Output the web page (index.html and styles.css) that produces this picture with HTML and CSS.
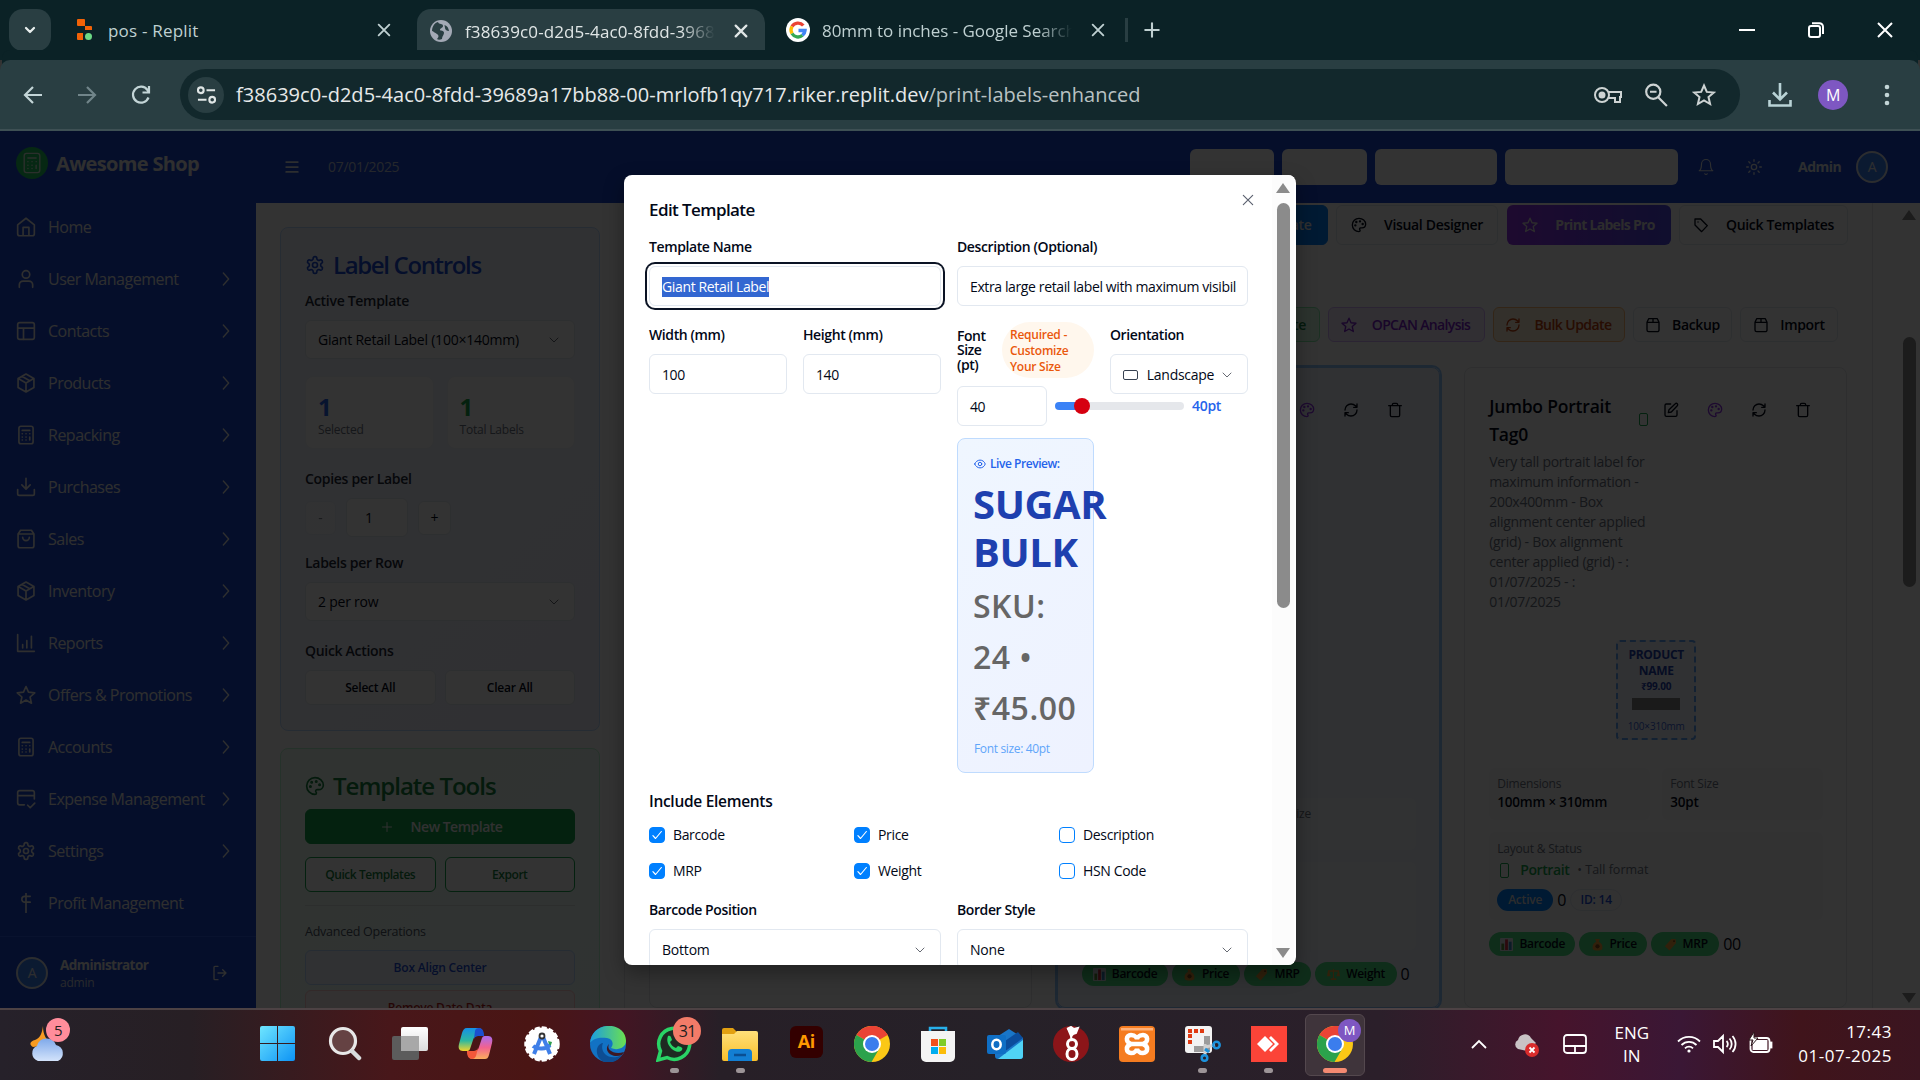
FILE: index.html
```html
<!DOCTYPE html>
<html lang="en">
<head>
<meta charset="utf-8">
<title>Awesome Shop - Print Labels</title>
<link rel="stylesheet" href="styles.css">
</head>
<body>
<svg class="sprite" xmlns="http://www.w3.org/2000/svg">
  <defs>
    <linearGradient id="sky" x1="0" y1="0" x2="1" y2="1"><stop offset="0" stop-color="#6fe6ff"/><stop offset="1" stop-color="#0d93f5"/></linearGradient>
    <linearGradient id="cloudg" x1="0" y1="0" x2="0" y2="1"><stop offset="0" stop-color="#7fa9ea"/><stop offset="1" stop-color="#d3e3fb"/></linearGradient>
    <linearGradient id="edgeg" x1="0" y1="0" x2="1" y2="0"><stop offset="0" stop-color="#1b9de2"/><stop offset="1" stop-color="#6be04f"/></linearGradient>
    <linearGradient id="foldg" x1="0" y1="0" x2="0" y2="1"><stop offset="0" stop-color="#ffe07a"/><stop offset="1" stop-color="#f9bf2b"/></linearGradient>
    <linearGradient id="copa" x1="0" y1="0" x2="0" y2="1"><stop offset="0" stop-color="#1590e8"/><stop offset=".55" stop-color="#2db8a0"/><stop offset="1" stop-color="#f3d32b"/></linearGradient>
    <linearGradient id="copb" x1="0" y1="0" x2="0" y2="1"><stop offset="0" stop-color="#a86cf0"/><stop offset=".5" stop-color="#f2628f"/><stop offset="1" stop-color="#fbae5c"/></linearGradient>
    <linearGradient id="grayg" x1="0" y1="0" x2="0" y2="1"><stop offset="0" stop-color="#fff"/><stop offset="1" stop-color="#dcdcdc"/></linearGradient>
  </defs>
  <symbol id="chev-r" viewBox="0 0 24 24"><path d="M8 3l8 9-8 9"/></symbol>
  <symbol id="chev-d" viewBox="0 0 24 24"><path d="M4 8l8 8 8-8"/></symbol>
  <symbol id="x" viewBox="0 0 24 24"><path d="M4 4l16 16M20 4L4 20"/></symbol>
  <symbol id="plus" viewBox="0 0 24 24"><path d="M12 3v18M3 12h18"/></symbol>
  <symbol id="home" viewBox="0 0 24 24"><path d="M2 9.500L12 1.500l10 8V20a2.500 2.500 0 0 1-2.500 2.500h-15A2.500 2.500 0 0 1 2 20zM8.500 22v-9.500h7V22"/></symbol>
  <symbol id="user" viewBox="0 0 24 24"><path d="M4 22v-3a4.500 4.500 0 0 1 4.500-4.500h7A4.500 4.500 0 0 1 20 19v3"/><circle cx="12" cy="6.500" r="4.500"/></symbol>
  <symbol id="contacts" viewBox="0 0 24 24"><rect x="2" y="2" width="20" height="20" rx="2.500"/><path d="M2 8.500h20M9 8.500V22"/></symbol>
  <symbol id="box" viewBox="0 0 24 24"><path d="M12 1.200l9.500 5.300v11L12 22.800 2.500 17.500v-11zM2.700 6.700L12 12l9.300-5.300M12 12v10.500M7 4l9.500 5.300"/></symbol>
  <symbol id="calc" viewBox="0 0 24 24"><rect x="3.500" y="1.500" width="17" height="21" rx="2.500"/><path d="M7.500 6.500h9M16.500 14.500V18M7.500 10.500h.1M12 10.500h.1M16.500 10.500h.1M7.500 14.500h.1M12 14.500h.1M7.500 18h.1M12 18h.1"/></symbol>
  <symbol id="download" viewBox="0 0 24 24"><path d="M2 15v5a2 2 0 0 0 2 2h16a2 2 0 0 0 2-2v-5M7 9.500l5 5 5-5M12 14.500V1.500"/></symbol>
  <symbol id="bag" viewBox="0 0 24 24"><path d="M5.500 1.500L2.500 6v14A2.500 2.500 0 0 0 5 22.500h14a2.500 2.500 0 0 0 2.500-2.500V6l-3-4.500zM2.500 6h19M16 10a4 4 0 0 1-8 0"/></symbol>
  <symbol id="chart" viewBox="0 0 24 24"><path d="M2 2v20h20M8 18v-4M13 18V9M18.500 18V4"/></symbol>
  <symbol id="star" viewBox="0 0 24 24"><path d="M12 1.800l3 6.800 7.500.8-5.600 5 1.600 7.400L12 18l-6.500 3.800 1.600-7.400-5.600-5 7.500-.8z"/></symbol>
  <symbol id="card" viewBox="0 0 24 24"><path d="M10 19H4.500A2.500 2.500 0 0 1 2 16.500v-12A2.500 2.500 0 0 1 4.500 2h15A2.500 2.500 0 0 1 22 4.500V12M2 8h20M14 19.500l3 3 5.500-5.500"/></symbol>
  <symbol id="gear" viewBox="0 0 24 24"><path d="M12.200 2h-.4a2 2 0 0 0-2 2v.2a2 2 0 0 1-1 1.700l-.4.300a2 2 0 0 1-2 0l-.2-.1a2 2 0 0 0-2.700.7l-.2.400a2 2 0 0 0 .7 2.700l.2.100a2 2 0 0 1 1 1.700v.5a2 2 0 0 1-1 1.800l-.2.100a2 2 0 0 0-.7 2.700l.2.400a2 2 0 0 0 2.700.7l.2-.1a2 2 0 0 1 2 0l.4.300a2 2 0 0 1 1 1.700v.2a2 2 0 0 0 2 2h.4a2 2 0 0 0 2-2v-.2a2 2 0 0 1 1-1.700l.4-.3a2 2 0 0 1 2 0l.2.100a2 2 0 0 0 2.700-.7l.2-.4a2 2 0 0 0-.7-2.700l-.2-.1a2 2 0 0 1-1-1.800v-.5a2 2 0 0 1 1-1.700l.2-.1a2 2 0 0 0 .7-2.700l-.2-.4a2 2 0 0 0-2.700-.7l-.2.100a2 2 0 0 1-2 0l-.4-.3a2 2 0 0 1-1-1.700V4a2 2 0 0 0-2-2z"/><circle cx="12" cy="12" r="3"/></symbol>
  <symbol id="profit" viewBox="0 0 24 24"><path d="M12 0v24M17 4h-6.500a3.500 3.500 0 0 0 0 7H17"/></symbol>
  <symbol id="logout" viewBox="0 0 24 24"><path d="M9 22H4.500A1.500 1.500 0 0 1 3 20.500v-17A1.500 1.500 0 0 1 4.500 2H9M16 17l5-5-5-5M21 12H9"/></symbol>
  <symbol id="menu" viewBox="0 0 24 24"><path d="M2 3.500h20M2 12h20M2 20.500h20"/></symbol>
  <symbol id="bell" viewBox="0 0 24 24"><path d="M6 8a6 6 0 0 1 12 0c0 7 3 9 3 9H3s3-2 3-9M10.300 21a2 2 0 0 0 3.400 0"/></symbol>
  <symbol id="sun" viewBox="0 0 24 24"><circle cx="12" cy="12" r="4"/><path d="M12 1v2.500M12 20.500V23M4.200 4.200L6 6M18 18l1.800 1.800M1 12h2.500M20.500 12H23M4.200 19.800L6 18M18 6l1.800-1.800"/></symbol>
  <symbol id="palette" viewBox="0 0 24 24"><path d="M12 2a10 10 0 1 0 0 20c1 0 1.700-.7 1.700-1.700 0-.4-.2-.8-.5-1.100a1.700 1.700 0 0 1 1.200-2.800h2A5.600 5.600 0 0 0 22 11c0-5-4.500-9-10-9z"/><circle cx="8" cy="7.500" r=".8"/><circle cx="13.500" cy="6.500" r=".8"/><circle cx="17.500" cy="10.500" r=".8"/><circle cx="6.500" cy="12.500" r=".8"/></symbol>
  <symbol id="tag" viewBox="0 0 24 24"><path d="M3 3h8.500l10 10-8.500 9L3 12zM7.500 7.500h.1"/></symbol>
  <symbol id="refresh" viewBox="0 0 24 24"><path d="M3 12a9 9 0 0 1 9-9 9.700 9.700 0 0 1 6.700 2.700L21 8M21 3v5h-5M21 12a9 9 0 0 1-9 9 9.700 9.700 0 0 1-6.700-2.700L3 16M8 16H3v5"/></symbol>
  <symbol id="pack" viewBox="0 0 24 24"><path d="M3 8l2.500-5.500h13L21 8v11.500A2.500 2.500 0 0 1 18.500 22h-13A2.500 2.500 0 0 1 3 19.500zM3 8h18M12 2.500V8"/></symbol>
  <symbol id="edit" viewBox="0 0 24 24"><path d="M11.500 3H5a2 2 0 0 0-2 2v14.500a2 2 0 0 0 2 2h14a2 2 0 0 0 2-2V13M18.400 2.600a2.100 2.100 0 0 1 3 3L12.500 15 8 16l1-4.500z"/></symbol>
  <symbol id="trash" viewBox="0 0 24 24"><path d="M2.500 5.500h19M19 5.500V20a2 2 0 0 1-2 2H7a2 2 0 0 1-2-2V5.500M8 5.500V4a2 2 0 0 1 2-2h4a2 2 0 0 1 2 2v1.500"/></symbol>
  <symbol id="eye" viewBox="0 0 24 24"><path d="M1.500 12C5 1.500 19 1.500 22.500 12 19 22.500 5 22.500 1.500 12z"/><circle cx="12" cy="12" r="3.500"/></symbol>
  <symbol id="check" viewBox="0 0 24 24"><path d="M5 13l4.500 5L19.500 6"/></symbol>
  <symbol id="e-chart" viewBox="0 0 14 14"><rect width="14" height="14" rx="1" fill="#e1e8ed"/><rect x="1.500" y="6" width="3" height="7" fill="#5c913b"/><rect x="5.500" y="1.500" width="3" height="11.500" fill="#dd2e44"/><rect x="9.500" y="4" width="3" height="9" fill="#3b88c3"/></symbol>
  <symbol id="e-money" viewBox="0 0 14 14"><path d="M4.500 1h5L8.500 4C12 6 13 9 12 12c-1 2-9 2-10 0-1-3 0-6 3.500-8z" fill="#f2a23a"/><circle cx="7" cy="9" r="2.300" fill="#8a4b1c"/></symbol>
  <symbol id="e-tag" viewBox="0 0 14 14"><path d="M8 1h4.500L13 5.500 6 13.500 1 9z" fill="#f2a23a"/><circle cx="10.800" cy="3.300" r="1" fill="#7a3c10"/></symbol>
  <symbol id="e-scale" viewBox="0 0 14 14"><path d="M6.400 1h1.200v1.500H13v1L14 9h-4l1.800-5H7.600v7H10v2H4v-2h2.400V4H2.500L4 9H0l1-5.500v-1h5.400z" fill="#f2a23a"/></symbol>
  <symbol id="chrome" viewBox="0 0 36 36"><circle cx="18" cy="18" r="18" fill="#fbc816"/><path d="M18 18L2.400 9A18 18 0 0 1 33.600 9z" fill="#ea4335"/><path d="M18 0a18 18 0 0 1 15.600 9H18z" fill="#ea4335"/><path d="M2.400 9A18 18 0 0 0 17.500 36l8-13.700L18 18z" fill="#2ba24c"/><circle cx="18" cy="18" r="9" fill="#fff"/><circle cx="18" cy="18" r="7" fill="#3b7ded"/></symbol>
</svg>

<div class="screen">
  <div class="tabstrip">
    <div class="tab-search"><svg class="i s12 w4"><use href="#chev-d"/></svg></div>
    <div class="tab tab-a">
      <svg class="fav" viewBox="0 0 16 22"><path d="M1 0h6a1 1 0 0 1 1 1v6H1a1 1 0 0 1-1-1V1a1 1 0 0 1 1-1zM8 7h6a1 1 0 0 1 1 1v3H8zM1 14h5v7H1a1 1 0 0 1-1-1v-5a1 1 0 0 1 1-1z" fill="#f26207"/><circle cx="11.500" cy="17.500" r="3.500" fill="#6bd985"/></svg>
      <span class="tab-t">pos - Replit</span>
      <svg class="i s16 w25"><use href="#x"/></svg>
    </div>
    <div class="tab tab-b">
      <svg class="globe" viewBox="0 0 22 22"><circle cx="11" cy="11" r="11" fill="#a3a9b5"/><path d="M8 2c1 3 5 1 5 4 0 2-3 2-3 4 0 1 4 0 4 3 0 2-2 3-2 6-2 1-4 1-5 0 2-2 2-4 0-5s-4-3-5-3c0-4 2-8 6-9zM14.500 5c3 1 4 3 4.500 6-2 0-4-1-4-3z" fill="#293e42"/></svg>
      <span class="tab-t fade">f38639c0-d2d5-4ac0-8fdd-39689</span>
      <svg class="i s16 w3"><use href="#x"/></svg>
    </div>
    <div class="tab tab-c">
      <svg class="gfav" viewBox="0 0 24 24"><circle cx="12" cy="12" r="12" fill="#fff"/><g fill="none" stroke-width="3.400"><path d="M17.300 7.500A7 7 0 0 0 6 8.500" stroke="#ea4335"/><path d="M6 8.500a7 7 0 0 0 0 7" stroke="#fbbc05"/><path d="M6 15.500a7 7 0 0 0 10.500 1.800" stroke="#34a853"/><path d="M16.500 17.300A7 7 0 0 0 19 12.500h-6.500" stroke="#4285f4"/></g></svg>
      <span class="tab-t fade">80mm to inches - Google Search</span>
      <svg class="i s16 w25"><use href="#x"/></svg>
    </div>
    <span class="tab-sep"></span>
    <svg class="i s18 w25 newtab"><use href="#plus"/></svg>
    <div class="winbtns">
      <svg viewBox="0 0 16 16"><path d="M0 8h16"/></svg>
      <svg viewBox="0 0 16 16"><rect x="1" y="4" width="11" height="11" rx="2"/><path d="M4 1.200h7.500A3.500 3.500 0 0 1 15 4.700V12"/></svg>
      <svg viewBox="0 0 16 16"><path d="M1 1l14 14M15 1L1 15"/></svg>
    </div>
  </div>

  <div class="toolbar">
    <svg class="nav" viewBox="0 0 20 20"><path d="M19 10H2M10 2l-8 8 8 8"/></svg>
    <svg class="nav dim" viewBox="0 0 20 20"><path d="M1 10h17M10 2l8 8-8 8"/></svg>
    <svg class="nav" viewBox="0 0 20 20"><path d="M17.500 12.500A8 8 0 1 1 16.500 5l1.500 2M18 1v6.500h-6.500"/></svg>
    <div class="omnibox">
      <div class="site"><svg viewBox="0 0 20 18"><circle cx="4" cy="4" r="3"/><path d="M10 4h9M1 14h9"/><circle cx="16" cy="14" r="3"/></svg></div>
      <span class="url">f38639c0-d2d5-4ac0-8fdd-39689a17bb88-00-mrlofb1qy717.riker.replit.dev<span>/print-labels-enhanced</span></span>
      <svg class="o-ic key" viewBox="0 0 28 18"><circle cx="8" cy="9" r="7"/><circle cx="8" cy="9" r="2.500" fill="#cdd3d3"/><path d="M14.500 6H27v5h-1v5h-5v-4h-6.500"/></svg>
      <svg class="o-ic" viewBox="0 0 22 22"><circle cx="8.500" cy="8" r="6.500"/><path d="M13 13l8 8M5.500 8h6"/></svg>
      <svg class="o-ic" viewBox="0 0 24 24"><path d="M12 2.500l2.800 6.400 7 .6-5.300 4.600 1.600 6.900L12 17.400 5.900 21l1.600-6.900L2.200 9.500l7-.6z"/></svg>
    </div>
    <svg class="dl" viewBox="0 0 24 24"><path d="M12 0v16M5 9.500l7 7 7-7M1.500 17v5.500h21V17"/></svg>
    <div class="me">M</div>
    <svg class="dots" viewBox="0 0 6 22"><circle cx="3" cy="3" r="2.300"/><circle cx="3" cy="11" r="2.300"/><circle cx="3" cy="19" r="2.300"/></svg>
  </div>

  <div class="page">
    <aside class="side">
      <div class="brand"><span class="brand-ic"><svg class="i s20 w15"><use href="#calc"/></svg></span><b>Awesome Shop</b></div>
      <nav class="menu">
        <a><svg class="i s20"><use href="#home"/></svg><span>Home</span></a>
        <a><svg class="i s20"><use href="#user"/></svg><span>User Management</span><svg class="i s16"><use href="#chev-r"/></svg></a>
        <a><svg class="i s20"><use href="#contacts"/></svg><span>Contacts</span><svg class="i s16"><use href="#chev-r"/></svg></a>
        <a><svg class="i s20"><use href="#box"/></svg><span>Products</span><svg class="i s16"><use href="#chev-r"/></svg></a>
        <a><svg class="i s20"><use href="#calc"/></svg><span>Repacking</span><svg class="i s16"><use href="#chev-r"/></svg></a>
        <a><svg class="i s20"><use href="#download"/></svg><span>Purchases</span><svg class="i s16"><use href="#chev-r"/></svg></a>
        <a><svg class="i s20"><use href="#bag"/></svg><span>Sales</span><svg class="i s16"><use href="#chev-r"/></svg></a>
        <a><svg class="i s20"><use href="#box"/></svg><span>Inventory</span><svg class="i s16"><use href="#chev-r"/></svg></a>
        <a><svg class="i s20"><use href="#chart"/></svg><span>Reports</span><svg class="i s16"><use href="#chev-r"/></svg></a>
        <a><svg class="i s20"><use href="#star"/></svg><span>Offers &amp; Promotions</span><svg class="i s16"><use href="#chev-r"/></svg></a>
        <a><svg class="i s20"><use href="#calc"/></svg><span>Accounts</span><svg class="i s16"><use href="#chev-r"/></svg></a>
        <a><svg class="i s20"><use href="#card"/></svg><span>Expense Management</span><svg class="i s16"><use href="#chev-r"/></svg></a>
        <a><svg class="i s20"><use href="#gear"/></svg><span>Settings</span><svg class="i s16"><use href="#chev-r"/></svg></a>
        <a><svg class="i s20"><use href="#profit"/></svg><span>Profit Management</span></a>
      </nav>
      <div class="account">
        <span class="avatar">A</span>
        <div class="who"><b>Administrator</b><span>admin</span></div>
        <svg class="i s16"><use href="#logout"/></svg>
      </div>
    </aside>

    <div class="content">
      <header class="top">
        <svg class="i s14 burger"><use href="#menu"/></svg>
        <span class="date">07/01/2025</span>
        <div class="slots"><i class="k1"></i><i class="k2"></i><i class="k3"></i><i class="k4"></i></div>
        <svg class="i s18 w15 bell"><use href="#bell"/></svg>
        <svg class="i s16 w2 sun"><use href="#sun"/></svg>
        <b>Admin</b>
        <span class="avatar">A</span>
      </header>

      <div class="body">
        <div class="left">
          <section class="panel blue">
            <h2><svg class="i s20"><use href="#gear"/></svg>Label Controls</h2>
            <label>Active Template</label>
            <div class="select"><span>Giant Retail Label (100×140mm)</span><svg class="i s12"><use href="#chev-d"/></svg></div>
            <div class="stats">
              <div><b class="c-blue">1</b><span>Selected</span></div>
              <div><b class="c-green">1</b><span>Total Labels</span></div>
            </div>
            <label class="m20">Copies per Label</label>
            <div class="stepper"><span class="off">-</span><span class="num">1</span><span>+</span></div>
            <label class="m16">Labels per Row</label>
            <div class="select"><span>2 per row</span><svg class="i s12"><use href="#chev-d"/></svg></div>
            <label class="m20">Quick Actions</label>
            <div class="pair"><span class="btn">Select All</span><span class="btn">Clear All</span></div>
          </section>
          <section class="panel green">
            <h2><svg class="i s20"><use href="#palette"/></svg>Template Tools</h2>
            <span class="btn solid"><svg class="i s12"><use href="#plus"/></svg>New Template</span>
            <div class="pair outline"><span class="btn">Quick Templates</span><span class="btn">Export</span></div>
            <hr>
            <p class="adv">Advanced Operations</p>
            <span class="btn op-blue">Box Align Center</span>
            <span class="btn op-red">Remove Date Data</span>
          </section>
        </div>

        <div class="board">
          <div class="row1">
            <span class="btn create">Create</span>
            <span class="btn" style="width:162px"><svg class="i s16"><use href="#palette"/></svg>Visual Designer</span>
            <span class="btn pro"><svg class="i s16"><use href="#star"/></svg>Print Labels Pro</span>
            <span class="btn" style="width:169px"><svg class="i s16"><use href="#tag"/></svg>Quick Templates</span>
          </div>
          <div class="row2">
            <span class="btn g">Create</span>
            <span class="btn p"><svg class="i s16"><use href="#star"/></svg>OPCAN Analysis</span>
            <span class="btn o"><svg class="i s16"><use href="#refresh"/></svg>Bulk Update</span>
            <span class="btn" style="width:99px"><svg class="i s16"><use href="#pack"/></svg>Backup</span>
            <span class="btn" style="width:98px"><svg class="i s16"><use href="#pack"/></svg>Import</span>
          </div>
          <div class="cards">
            <article class="tpl"></article>
            <article class="tpl active">
              <div class="tpl-head"><div></div><div class="acts"><svg class="i s16"><use href="#edit"/></svg><svg class="i s16 c-purple"><use href="#palette"/></svg><svg class="i s16"><use href="#refresh"/></svg><svg class="i s16"><use href="#trash"/></svg></div></div>
              <div class="tpl-body">
                <div class="dims"><div></div><div><span>Font Size</span></div></div>
                <div class="layout"></div>
                <div class="badges"><span style="width:86px"><svg><use href="#e-chart"/></svg>Barcode</span><span style="width:68px"><svg><use href="#e-money"/></svg>Price</span><span style="width:67px"><svg><use href="#e-tag"/></svg>MRP</span><span style="width:82px"><svg><use href="#e-scale"/></svg>Weight</span><em>0</em></div>
              </div>
            </article>
            <article class="tpl">
              <div class="tpl-head">
                <div class="tpl-title"><h3>Jumbo Portrait<br>Tag0</h3><i class="tall"></i>
                </div>
                <div class="acts"><svg class="i s16"><use href="#edit"/></svg><svg class="i s16 c-purple"><use href="#palette"/></svg><svg class="i s16"><use href="#refresh"/></svg><svg class="i s16"><use href="#trash"/></svg></div>
              </div>
              <p class="desc">Very tall portrait label for<br>maximum information -<br>200x400mm - Box<br>alignment center applied<br>(grid) - Box alignment<br>center applied (grid) - :<br>01/07/2025 - :<br>01/07/2025</p>
              <div class="mini"><b>PRODUCT<br>NAME</b><strong>₹99.00</strong><i></i><span>100×310mm</span></div>
              <div class="dims"><div><span>Dimensions</span><b>100mm × 310mm</b></div><div><span>Font Size</span><b>30pt</b></div></div>
              <div class="layout">
                <span>Layout &amp; Status</span>
                <div class="orient"><i class="tall"></i><b>Portrait</b><span>• Tall format</span></div>
                <div class="state"><span class="on">Active</span><em>0</em><span class="id">ID: 14</span></div>
              </div>
              <div class="badges"><span style="width:86px"><svg><use href="#e-chart"/></svg>Barcode</span><span style="width:68px"><svg><use href="#e-money"/></svg>Price</span><span style="width:68px"><svg><use href="#e-tag"/></svg>MRP</span><em>00</em></div>
            </article>
          </div>
        </div>
        <div class="pagebar"><i class="up"></i><i class="thumb"></i><i class="down"></i></div>
      </div>
    </div>
    <div class="overlay"></div>
  </div>

  <footer class="taskbar">
    <div class="weather"><svg viewBox="0 0 38 40"><path d="M14 4c0 9 3 14 10 18L4 25C-1 22 2 19 6 18c6-2 7-8 8-14z" fill="#f79b22"/><path d="M9 39a8 8 0 0 1-1-15 10 10 0 0 1 19-1 8.500 8.500 0 0 1 2 16z" fill="url(#cloudg)"/></svg><b>5</b></div>
    <div class="apps">
      <span><svg viewBox="0 0 36 36"><path d="M0 2a2 2 0 0 1 2-2h15v17H0zM18 0h15a2 2 0 0 1 2 2v15H18zM0 18h17v17H2a2 2 0 0 1-2-2zM18 18h17v15a2 2 0 0 1-2 2H18z" fill="url(#sky)"/></svg></span>
      <span><svg viewBox="0 0 36 36"><circle cx="17" cy="15" r="12.500" fill="#654243" stroke="#e8e8e8" stroke-width="3.200"/><path d="M26 25l7 7" stroke="#d9dcdd" stroke-width="4.500" stroke-linecap="round"/></svg></span>
      <span><svg viewBox="0 0 36 36"><rect x="0" y="10" width="27" height="24" rx="2" fill="#5c5c5c"/><rect x="9" y="1" width="27" height="24" rx="2" fill="url(#grayg)"/><path d="M9 10h18v15H9z" fill="#a8a8a8"/></svg></span>
      <span><svg viewBox="0 0 36 36"><path d="M27 33H15c-4 0-5-3-6-8h7c3 0 4-1 5-4l3-9c1-2 2-2 4-2h2c4 0 5 3 4 7l-3 12c-1 3-2 4-4 4z" fill="url(#copb)"/><path d="M9 25h7c2 0 3-1 4-3l-2 8c-1 2-2 3-4 3-4 0-5-4-5-8z" fill="#f4583a"/><path d="M9 2h11c4 0 5 3 6 8h-6c-3 0-4 1-5 4l-3 9c-1 2-2 2-4 2H5c-4 0-5-3-4-7L4 7c1-3 2-5 5-5z" fill="url(#copa)"/><path d="M26 10h-6c-2 0-3 1-4 3l1-8c0-2 2-3 4-3 4 0 5 4 5 8z" fill="#1b4fd0"/></svg></span>
      <span><svg viewBox="0 0 36 36"><circle cx="18" cy="18" r="16.500" fill="#fff" stroke="#fff" stroke-width="2.500" stroke-dasharray="5 2"/><path d="M24 15l4 1-2 6z" fill="#2f9e4f"/><path d="M17 11L10 28M19 11l7 17M9 20c5 4 13 3 17-1" fill="none" stroke="#3f7fe8" stroke-width="4"/><circle cx="18" cy="10" r="2.500" fill="#fff" stroke="#333" stroke-width="1.800"/></svg></span>
      <span><svg viewBox="0 0 36 36"><circle cx="18" cy="18" r="18" fill="#1272c4"/><path d="M0 17C2-6 36-5 36 15c0 7-9 10-15 7 3-4 2-9-4-10C10 11 3 12 0 17z" fill="url(#edgeg)"/><path d="M13 17c-4 9 6 19 19 12-5 8-14 9-20 6C4 29 6 18 13 17z" fill="#0d4d93"/><path d="M19 18c-3 6 5 11 15 8l-2 3c-11 4-19-5-13-11z" fill="#3d1824"/></svg></span>
      <span class="run"><svg viewBox="0 0 36 36"><path d="M2 34l2.500-9A15.500 15.500 0 1 1 11 31.500z" fill="#1e2a22" stroke="#29d366" stroke-width="3.500"/><path d="M12 10c2-1 3 0 4 4l-2 2c1 3 3 5 6 6l2-2c4 1 5 2 4 4-4 6-18-4-14-14z" fill="#29d366"/></svg><b class="n31">31</b></span>
      <span class="run"><svg viewBox="0 0 36 36"><path d="M0 4a2 2 0 0 1 2-2h9l4 4-3 3H0z" fill="#e2a011"/><path d="M0 8h12l3-3h19a2 2 0 0 1 2 2v26a2 2 0 0 1-2 2H2a2 2 0 0 1-2-2z" fill="url(#foldg)"/><path d="M6 27a4 4 0 0 1 4-4h16a4 4 0 0 1 4 4v8H6z" fill="#137fd3"/><path d="M12 29h12" stroke="#0a4f92" stroke-width="2.500"/></svg></span>
      <span><i class="ai">Ai</i></span>
      <span><svg><use href="#chrome"/></svg></span>
      <span><svg viewBox="0 0 36 36"><path d="M10 6V2h16v4" fill="none" stroke="#27b0ea" stroke-width="2.500"/><path d="M1 5h34v26a5 5 0 0 1-5 5H6a5 5 0 0 1-5-5z" fill="#f4f4f4"/><path d="M11 13h7v7h-7z" fill="#f1511b"/><path d="M19 13h7v7h-7z" fill="#80cc28"/><path d="M11 21h7v7h-7z" fill="#00adef"/><path d="M19 21h7v7h-7z" fill="#fbbc09"/></svg></span>
      <span><svg viewBox="0 0 36 36"><path d="M8 12L22 3l14 9v18a3 3 0 0 1-3 3H11a3 3 0 0 1-3-3z" fill="#1976c8"/><path d="M15 17l16-11 5 6-19 14z" fill="#0b4d9c"/><path d="M36 14v16a3 3 0 0 1-3 3H11z" fill="#50d3f5"/><rect y="9" width="19" height="19" rx="2" fill="#0f6fc5"/><ellipse cx="9.500" cy="18.500" rx="4.200" ry="4.700" fill="none" stroke="#fff" stroke-width="2.500"/></svg></span>
      <span><svg viewBox="0 0 36 36"><circle cx="18" cy="18" r="18" fill="#8c1519"/><path d="M14 3l4-2 3 2 4-1-2 5c-4 1-6 3-4 8" fill="#fff" stroke="#fff" stroke-width="2"/><ellipse cx="19" cy="18" rx="4.500" ry="4.500" fill="none" stroke="#fff" stroke-width="3"/><ellipse cx="19" cy="28" rx="5" ry="5.500" fill="none" stroke="#fff" stroke-width="3"/></svg></span>
      <span><svg viewBox="0 0 36 36"><rect width="36" height="36" rx="4" fill="#f57c20"/><path d="M2 2h32v2.500H2z" fill="#ffb27a"/><path d="M12 18c-6-2-5-9 0-9s6 4 6 4 1-4 6-4 6 7 0 9c6 2 5 9 0 9s-6-4-6-4-1 4-6 4-6-7 0-9zM13 18h10" fill="none" stroke="#fff" stroke-width="4.500"/></svg></span>
      <span class="run"><svg viewBox="0 0 36 36"><rect width="27" height="27" rx="3" fill="#f3f3f3"/><path d="M3 5h17M5 8v11" stroke="#e03a12" stroke-width="4" stroke-dasharray="4 2"/><path d="M9 20h10V10h6v16H9z" fill="#9c9c9c"/><path d="M20 21l10-2M20 18v12" stroke="#d0d0d0" stroke-width="3"/><circle cx="31.500" cy="19" r="3.200" fill="none" stroke="#1c92dc" stroke-width="2.500"/><circle cx="19.500" cy="32" r="2.800" fill="none" stroke="#1c92dc" stroke-width="2.500"/><path d="M20 23l4 3" stroke="#1c92dc" stroke-width="3"/></svg></span>
      <span class="run"><svg viewBox="0 0 36 36"><path d="M0 0h36v36H0z" fill="#fb4438"/><path d="M14 10l8 8-8 8-8-8z" fill="#fff"/><path d="M19 11l7 7-7 7" fill="none" stroke="#fff" stroke-width="2.800"/></svg></span>
      <span class="cur"><svg><use href="#chrome"/></svg><b class="mm">M</b></span>
    </div>
    <div class="tray">
      <svg class="t-chev" viewBox="0 0 16 10"><path d="M1 9l7-7 7 7"/></svg>
      <svg class="t-cloud" viewBox="0 0 26 24"><path d="M4 15a5 5 0 0 1 0-9 7 7 0 0 1 13-2l5 5-9 8z" fill="#c9c3c5"/><circle cx="18" cy="16" r="7" fill="#d92c2c"/><path d="M15.500 13.500l5 5M20.500 13.500l-5 5" stroke="#fff" stroke-width="1.800"/></svg>
      <svg class="t-pad" viewBox="0 0 24 20"><rect x="1" y="1" width="22" height="18" rx="3"/><path d="M1 12h22M12 12v7"/></svg>
      <span class="lang">ENG<br>IN</span>
      <svg class="t-wifi" viewBox="0 0 24 18"><path d="M1 6.500a15.500 15.500 0 0 1 22 0M4.500 10a10.500 10.500 0 0 1 15 0M8 13.300a5.700 5.700 0 0 1 8 0"/><circle cx="12" cy="16" r="1.600" fill="#fff" stroke="none"/></svg>
      <svg class="t-vol" viewBox="0 0 24 20"><path d="M1 7h4l5-5v16l-5-5H1zM13.500 7a4 4 0 0 1 0 6M16.500 4.500a8 8 0 0 1 0 11M19.500 2a12 12 0 0 1 0 16"/></svg>
      <svg class="t-bat" viewBox="0 0 25 20"><rect x="2.500" y="4" width="19" height="14" rx="3"/><path d="M5.500 7h13v8h-13z" fill="#fff"/><path d="M22 8.500v5h1.500v-5z" fill="#fff"/><path d="M6 -2L1 6h4l-2 6 7-8H6z" fill="#fff" stroke="#2b171b" stroke-width="1"/></svg>
      <span class="clock">17:43<br>01-07-2025</span>
    </div>
  </footer>

  <div class="dialog">
    <div class="form">
      <h1>Edit Template</h1>
      <svg class="i s14 close"><use href="#x"/></svg>
      <div class="g2">
        <div class="f"><label>Template Name</label><div class="in focus"><mark>Giant Retail Label</mark></div></div>
        <div class="f"><label>Description (Optional)</label><div class="in"><span class="clip">Extra large retail label with maximum visibil</span></div></div>
      </div>
      <div class="g4">
        <div class="f"><label>Width (mm)</label><div class="in">100</div></div>
        <div class="f"><label>Height (mm)</label><div class="in">140</div></div>
        <div class="fs">
          <div class="fs-top"><span class="fs-l">Font<br>Size<br>(pt)</span><span class="req">Required -<br>Customize<br>Your Size</span></div>
          <div class="fs-row"><div class="in">40</div><div class="slider"><i></i><b></b></div><span class="pt">40pt</span></div>
          <div class="live">
            <div class="live-t"><svg class="i s12"><use href="#eye"/></svg>Live Preview:</div>
            <div class="big">SUGAR<br>BULK</div>
            <div class="sku">SKU:<br>24 •<br>₹45.00</div>
            <div class="fsz">Font size: 40pt</div>
          </div>
        </div>
        <div class="f"><label>Orientation</label><div class="in sel"><i class="wide"></i><span class="land">Landscape</span><svg class="i s12"><use href="#chev-d"/></svg></div></div>
      </div>
      <h4>Include Elements</h4>
      <div class="g3">
        <span><i class="cb on"><svg class="i"><use href="#check"/></svg></i>Barcode</span><span><i class="cb on"><svg class="i"><use href="#check"/></svg></i>Price</span><span><i class="cb"></i>Description</span>
        <span><i class="cb on"><svg class="i"><use href="#check"/></svg></i>MRP</span><span><i class="cb on"><svg class="i"><use href="#check"/></svg></i>Weight</span><span><i class="cb"></i>HSN Code</span>
      </div>
      <div class="g2 last">
        <div class="f"><label>Barcode Position</label><div class="in sel"><span>Bottom</span><svg class="i s12"><use href="#chev-d"/></svg></div></div>
        <div class="f"><label>Border Style</label><div class="in sel"><span>None</span><svg class="i s12"><use href="#chev-d"/></svg></div></div>
      </div>
    </div>
    <div class="bar"><i class="up"></i><i class="thumb"></i><i class="down"></i></div>
  </div>
</div>
</body>
</html>
```
FILE: styles.css
```css
* { box-sizing: border-box; }
body { margin: 0; font-family: "Open Sans", "Noto Sans", sans-serif; font-size: 14px; line-height: 20px; letter-spacing: -0.2px; color: #020817; background: #333; }
h1, h2, h3, h4, p, hr { margin: 0; }
i, em { font-style: normal; }
.sprite { position: absolute; width: 0; height: 0; }
.screen { position: relative; width: 1920px; height: 1080px; overflow: hidden; display: grid; grid-template-rows: 60px 71px 877px 72px; }

.i { fill: none; stroke: currentColor; stroke-width: 2; stroke-linecap: round; stroke-linejoin: round; flex: none; }
.s12 { width: 12px; height: 12px; }
.s14 { width: 14px; height: 14px; }
.s16 { width: 16px; height: 16px; }
.s18 { width: 18px; height: 18px; }
.s20 { width: 20px; height: 20px; }
.w15 { stroke-width: 1.5; }
.w25 { stroke-width: 2.8; }
.w3 { stroke-width: 3.4; }
.w4 { stroke-width: 4.5; }

/* browser chrome */
.tabstrip { display: flex; align-items: center; background: #0b2226; color: #bfd0d1; padding-left: 9px; }
.tab-search { width: 42px; height: 42px; border-radius: 14px; background: #293e42; display: flex; align-items: center; justify-content: center; color: #e8eeee; }
.tab { display: flex; align-items: center; }
.tab-t { font-size: 17px; letter-spacing: 0.2px; flex: 1; white-space: nowrap; overflow: hidden; line-height: 24px; padding-top: 2px; }
.fade { -webkit-mask-image: linear-gradient(90deg, #000 calc(100% - 34px), transparent); mask-image: linear-gradient(90deg, #000 calc(100% - 34px), transparent); }
.tab-a { width: 366px; padding: 0 25px 0 26px; }
.fav { width: 16px; height: 22px; margin-right: 15px; }
.tab-b { width: 348px; height: 51px; align-self: flex-end; background: #293e42; border-radius: 14px 14px 0 0; padding: 0 16px 8px 13px; color: #e0e6e6; }
.tab-b .tab-t { margin-right: 18px; letter-spacing: 0.12px; }
.globe { width: 22px; height: 22px; margin-right: 13px; }
.tab-c { width: 360px; padding: 0 19px 0 21px; }
.gfav { width: 24px; height: 24px; margin-right: 12px; }
.tab-c .tab-t { margin-right: 18px; letter-spacing: -0.05px; }
.tab-sep { width: 3px; height: 24px; background: #293e42; }
.newtab { margin-left: 15px; }
.winbtns { margin-left: auto; display: flex; gap: 53px; padding-right: 27px; }
.winbtns svg { width: 16px; height: 16px; fill: none; stroke: #fff; stroke-width: 2; }
.toolbar { background: #293e42; border-bottom: 2px solid #3e5054; border-radius: 10px 10px 0 0; box-shadow: 0 -12px 0 -2px #0b2226; display: flex; align-items: center; padding: 0 0 0 23px; }
.nav { width: 20px; height: 20px; fill: none; stroke: #c3d5d7; stroke-width: 2.2; margin-right: 34px; }
.nav.dim { stroke: #71858a; }
.omnibox { width: 1560px; height: 51px; margin-left: -5px; border-radius: 26px; background: #12282c; display: flex; align-items: center; padding: 0 24px 0 8px; flex: none; }
.site { width: 36px; height: 36px; border-radius: 50%; background: #293e42; display: flex; align-items: center; justify-content: center; }
.site svg { width: 19px; height: 18px; fill: none; stroke: #e0e6e6; stroke-width: 2.2; }
.url { flex: 1; margin-left: 12px; font-size: 20px; letter-spacing: 0.03px; line-height: 28px; color: #e6e9e9; white-space: nowrap; }
.url span { color: #b9c2c3; }
.o-ic { width: 24px; height: 24px; margin-left: 24px; fill: none; stroke: #cdd3d3; stroke-width: 2; }
.o-ic.key { width: 28px; height: 18px; margin-right: -2px; }
.dl { width: 24px; height: 24px; margin-left: 28px; fill: none; stroke: #b9d3d6; stroke-width: 2.6; }
.me { width: 30px; height: 30px; border-radius: 50%; background: #7e57c2; color: #fff; margin-left: 26px; text-align: center; line-height: 30px; font-size: 16px; }
.dots { width: 6px; height: 28px; margin-left: 36px; fill: #c3d5d7; }

/* page */
.page { position: relative; display: grid; grid-template-columns: 256px 1fr; background: #fff; overflow: hidden; }
.overlay { position: absolute; inset: 0; background: rgba(0, 0, 0, 0.8); }
.side { height: 877px; background: #1b48d2; color: #e8e8e8; display: flex; flex-direction: column; }
.brand { display: flex; align-items: center; gap: 8px; padding: 16px 16px 0; font-size: 20px; letter-spacing: -0.65px; height: 48px; }
.brand-ic { width: 32px; height: 32px; border-radius: 50%; background: #22c55e; display: flex; align-items: center; justify-content: center; color: #d6e8da; }
.brand-ic .i { width: 22px; height: 22px; }
.brand b { line-height: 28px; padding-top: 2px; }
.menu { padding-top: 22px; }
.menu a { height: 52px; display: flex; align-items: center; padding: 0 22px 0 16px; font-size: 16px; letter-spacing: -0.5px; }
.menu span { flex: 1; margin-left: 12px; white-space: nowrap; }
.account { margin-top: auto; height: 72px; border-top: 1px solid #2d5ce4; display: flex; align-items: center; padding: 0 28px 0 16px; }
.avatar { width: 32px; height: 32px; border-radius: 50%; border: 2px solid #d9dfe8; background: #3b82f6; color: #e5e7eb; display: flex; align-items: center; justify-content: center; font-size: 14px; }
.who { flex: 1; margin-left: 12px; display: flex; flex-direction: column; line-height: 18px; padding-top: 2px; }
.who b { font-size: 13.500px; letter-spacing: -0.55px; }
.who span { font-size: 12px; color: #c8cdd8; }
.content { display: flex; flex-direction: column; height: 877px; min-width: 0; }
.top { height: 72px; background: #1b48d2; color: #dfe3ea; display: flex; align-items: center; padding: 0 32px 0 29px; flex: none; }
.burger { margin-right: 29px; stroke-width: 3; }
.date { color: #b9c2d8; letter-spacing: -0.3px; }
.slots { margin-left: auto; display: flex; gap: 8px; }
.slots i { height: 36px; border-radius: 6px; background: #fff; }
.k1 { width: 84px; } .k2 { width: 85px; } .k3 { width: 122px; } .k4 { width: 173px; }
.bell { margin-left: 19px; }
.sun { margin: 0 36px 0 31px; }
.top b { width: 58px; font-weight: 700; letter-spacing: -0.5px; }
.body { flex: 1; min-height: 0; display: grid; grid-template-columns: 320px 1249px 1fr; column-gap: 24px; padding-left: 24px; overflow: hidden; }
.left { padding-top: 24px; }
.panel { border: 1px solid; border-radius: 8px; padding: 21px 24px 24px; }
.panel.blue { height: 504px; background: linear-gradient(135deg, #eff6ff, #eef0ff); border-color: #bfdbfe; margin-bottom: 17px; }
.panel.green { height: 330px; padding-bottom: 0; background: linear-gradient(135deg, #f0fdf4, #ecfdfa); border-color: #bbf7d0; }
.panel h2 { display: flex; align-items: center; gap: 8px; height: 32px; font-size: 24px; font-weight: 600; letter-spacing: -1.35px; color: #1d4ed8; }
.panel.green h2 { color: #15803d; letter-spacing: -1px; }
.panel label { display: block; font-weight: 600; height: 20px; margin: 10px 0 9px; color: #1f2937; letter-spacing: -0.3px; }
.panel label.m20 { margin-top: 20px; }
.panel label.m16 { margin-top: 16px; }
.select { height: 39px; border: 1px solid #e2e8f0; border-radius: 6px; background: #fff; display: flex; align-items: center; justify-content: space-between; padding: 0 14px 0 12px; letter-spacing: -0.22px; }
.select .i, .sel .i { opacity: .6; }
.stats { display: grid; grid-template-columns: 1fr 1fr; gap: 13px; margin-top: 17px; }
.stats div { height: 73px; border: 1px solid #eef2f7; border-radius: 8px; background: #fff; padding: 15px 12px; display: flex; flex-direction: column; }
.stats b { font-size: 24px; line-height: 30px; }
.stats span { font-size: 12px; line-height: 16px; color: #6b7280; }
.c-blue { color: #2563eb; } .c-green { color: #16a34a; } .c-purple { color: #9333ea; }
.stepper { display: flex; align-items: center; gap: 10px; height: 39px; }
.stepper span { width: 33px; height: 34px; background: #fff; border: 1px solid #e2e8f0; border-radius: 6px; text-align: center; line-height: 32px; }
.stepper .num { width: 62px; height: 39px; line-height: 38px; padding-right: 16px; }
.stepper .off { width: 31px; opacity: .5; }
.btn { display: flex; align-items: center; justify-content: center; height: 35px; border: 1px solid #e2e8f0; border-radius: 6px; background: #fff; font-weight: 600; font-size: 12px; white-space: nowrap; }
.pair { display: grid; grid-template-columns: 1fr 1fr; gap: 9px; }
.pair .btn { padding-top: 1px; }
.solid { margin-top: 7px; gap: 18px; background: #16a34a; border-color: #16a34a; color: #f3f3f3; font-size: 14px; letter-spacing: -0.5px; padding-left: 3px; }
.outline { margin: 13px 0; letter-spacing: -0.45px; }
.outline .btn { border-color: #16a34a; color: #15803d; }
.panel hr { border: 0; height: 1px; background: #dbe7e0; }
.adv { margin: 16px 0 8px; font-size: 12.5px; font-weight: 500; color: #4b5563; letter-spacing: -0.25px; }
.op-blue { background: #eff6ff; border-color: #bfdbfe; color: #1d4ed8; margin-bottom: 5px; }
.op-red { background: #fef2f2; border-color: #fecaca; color: #b91c1c; }
.board { border: solid #e5e7eb; border-width: 0 1px; padding: 2px 23px 0 24px; min-width: 0; }
.row1, .row2 { display: flex; justify-content: flex-end; gap: 8px; }
.row1 .btn, .row2 .btn { font-size: 14px; gap: 16px; letter-spacing: -0.32px; }
.row1 .btn { height: 40px; gap: 17px; }
.row1 { gap: 8.5px; margin-right: 1px; }
.row1 .create { width: 110px; background: #0080ff; border-color: #0080ff; color: #eee; justify-content: flex-end; padding-right: 15px; }
.row1 .pro { width: 164px; border: 0; background: linear-gradient(90deg, #9333ea, #4f46e5); color: #ddd; font-weight: 700; letter-spacing: -0.7px; }
.row2 { margin: 62px 11px 25px 0; }
.row2 .btn { gap: 11px; }
.row2 .g { width: 100px; background: #dcfce7; border-color: #86efac; color: #15803d; justify-content: flex-end; padding-right: 13px; }
.row2 .p { width: 157px; background: #f3e8ff; border-color: #d8b4fe; color: #7e22ce; letter-spacing: -0.65px; gap: 15px; padding-right: 2px; }
.row2 .o { width: 132px; background: #ffedd5; border-color: #fdba74; color: #c2410c; letter-spacing: -0.55px; gap: 13px; padding-right: 1px; }
.cards { display: grid; grid-template-columns: repeat(3, 383px); column-gap: 24.600px; }
.tpl { height: 641px; border: 1px solid #e5e7eb; border-radius: 8px; padding: 24px 23px 0 24px; background: #fff; }
.tpl.active { background: linear-gradient(135deg, #eff6ff, #eef2ff); border-color: #93c5fd; box-shadow: 0 0 0 2px #93c5fd; }
.tpl-head { display: flex; justify-content: space-between; height: 58px; margin-right: -2px; }
.tpl.active .tpl-head { margin-right: -1px; }
.tpl-title { display: flex; width: 159px; justify-content: space-between; }
.tpl-title .tall { margin-top: 21px; }
.tall { width: 9px; height: 13px; border: 1.500px solid #16a34a; border-radius: 2px; flex: none; }
.tpl h3 { font-size: 17.500px; line-height: 28px; font-weight: 600; letter-spacing: -0.2px; white-space: nowrap; }
.acts { display: grid; grid-template-columns: repeat(4, 44px); justify-items: center; height: 36px; align-items: center; }
.acts .i { display: block; }
.desc { color: #6b7280; height: 160px; margin: 2px 0 28px; letter-spacing: -0.28px; }
.mini { width: 80px; height: 100px; margin: 0 auto 28px; border: 2px dashed #60a5fa; border-radius: 4px; background: #eff6ff; display: flex; flex-direction: column; align-items: center; padding-top: 5px; color: #1e40af; line-height: 16px; font-size: 12px; text-align: center; }
.mini b { letter-spacing: -0.3px; }
.mini strong { font-size: 10px; line-height: 14px; }
.mini i { width: 48px; height: 12px; background: #808080; margin: 5px 0 8px; flex: none; }
.mini span { font-size: 10px; color: #3b62d8; }
.dims { display: grid; grid-template-columns: 161px 161px; gap: 12px; margin-bottom: 12px; }
.dims div { height: 52px; border-radius: 6px; background: #f9fafb; padding: 7px 8px; display: flex; flex-direction: column; line-height: 18px; }
.dims span, .layout > span { font-size: 12px; color: #6b7280; }
.dims b { font-weight: 600; font-size: 13.500px; }
.layout { height: 88px; border-radius: 6px; background: #f9fafb; padding: 7px 8px; display: flex; flex-direction: column; margin-bottom: 12px; }
.orient { display: flex; align-items: center; height: 22px; }
.orient b { color: #16a34a; font-weight: 600; margin: 0 8px 0 12px; letter-spacing: -0.4px; }
.orient .tall { margin-left: 3px; margin-right: -1px; height: 15px; }
.orient span { font-size: 12.500px; color: #6b7280; letter-spacing: 0; }
.state { display: flex; align-items: center; gap: 4px; margin-top: 8px; height: 22px; }
.state span { height: 22px; border-radius: 11px; font-size: 12px; font-weight: 600; line-height: 22px; text-align: center; }
.state em, .badges em { font-size: 16px; }
.state .on { width: 56px; background: #0080ff; color: #ddd; }
.state .id { width: 52px; border: 1px solid #e2e8f0; line-height: 20px; color: #1d4ed8; }
.badges { display: flex; gap: 4px; align-items: center; letter-spacing: -0.3px; }
.badges span { height: 24px; border-radius: 12px; background: #4ade80; font-size: 12px; font-weight: 600; display: flex; align-items: center; justify-content: center; gap: 6px; padding-left: 1px; }
.badges svg { width: 13px; height: 13px; }
.tpl.active .tpl-body { margin-top: 348px; }
.tpl.active .dims div, .tpl.active .layout { background: #f6f9ff; }
.pagebar { display: flex; flex-direction: column; align-items: center; padding: 7px 11px 4px 0; margin-left: 5px; }
.up, .down { border: solid transparent; border-width: 0 7px 10px; border-bottom-color: #8a8a8a; }
.down { border-width: 10px 7px 0; border-top-color: #8a8a8a; }
.pagebar .thumb { width: 13px; height: 250px; margin: 117px 0 406px; border-radius: 7px; background: #8a8a8a; flex: none; }

/* dialog */
.dialog { position: absolute; left: 624px; top: 175px; width: 672px; height: 790px; border-radius: 8px; background: #fff; box-shadow: 0 8px 20px rgba(0, 0, 0, .35); display: grid; grid-template-columns: 648px 22px; overflow: hidden; }
.form { position: relative; padding: 20px 24px 0 25px; height: 790px; overflow: hidden; }
.form h1 { font-size: 17px; line-height: 30px; font-weight: 600; letter-spacing: -0.58px; margin-bottom: 12px; }
.close { position: absolute; right: 17px; top: 18px; color: #5c6270; }
.g2 { display: grid; grid-template-columns: 292px 291px; gap: 16px; }
.g4 { display: grid; grid-template-columns: 138px 138px 137px 138px; gap: 16px; margin-top: 16px; height: 451px; }
.f label { display: block; height: 20px; margin-bottom: 9px; font-weight: 600; letter-spacing: -0.4px; }
.g4 .f label { margin-top: 3px; }
.in { height: 40px; border: 1px solid #e2e8f0; border-radius: 6px; padding: 1px 12px 0; display: flex; align-items: center; background: #fff; white-space: nowrap; overflow: hidden; letter-spacing: -0.38px; }
.in.focus { box-shadow: 0 0 0 2px #fff, 0 0 0 4px #0b1324; letter-spacing: -0.36px; }
.in mark { background: #3367d1; color: #fff; line-height: 20px; }
.in.sel { justify-content: space-between; padding: 1px 14px 0 12px; letter-spacing: -0.2px; }
.in .land { margin-left: 2px; letter-spacing: -0.27px; }
.wide { width: 15px; height: 10px; border: 1.500px solid #374151; border-radius: 2px; }
.fs-top { display: flex; justify-content: space-between; height: 56px; }
.fs-l { font-weight: 600; line-height: 14.300px; padding-top: 7px; letter-spacing: -0.5px; }
.req { width: 92px; height: 56px; border-radius: 28px; background: #fff7ed; color: #ea580c; font-size: 12px; font-weight: 600; line-height: 16px; padding: 5px 8px; white-space: nowrap; letter-spacing: -0.25px; }
.fs-row { display: grid; grid-template-columns: 90px 129px 50px; gap: 8px; align-items: center; margin-top: 8px; height: 40px; }
.slider { height: 8px; border-radius: 4px; background: linear-gradient(90deg, #3b82f6 21%, #e5e7eb 21%); display: flex; align-items: center; }
.slider i { width: 19px; }
.slider b { width: 16px; height: 16px; border-radius: 50%; background: #d60010; }
.pt { color: #2563eb; font-weight: 600; letter-spacing: -0.3px; }
.live { height: 335px; margin-top: 12px; border: 1px solid #bfdbfe; border-radius: 8px; background: linear-gradient(135deg, #eff6ff, #eef2ff); padding: 15px 16px 0; }
.live-t { display: flex; gap: 4px; align-items: center; font-size: 12px; font-weight: 600; color: #2563eb; white-space: nowrap; height: 20px; letter-spacing: -0.45px; }
.big { margin-top: 6px; margin-left: -1px; font-size: 40px; line-height: 48px; font-weight: 700; letter-spacing: -0.4px; color: #1e40af; }
.sku { margin-left: -1px; font-size: 32px; line-height: 51px; font-weight: 600; letter-spacing: 0.5px; color: #666; white-space: nowrap; margin-top: 4px; }
.fsz { font-size: 12px; color: #60a5fa; margin-top: 6px; white-space: nowrap; letter-spacing: -0.35px; }
.form h4 { font-size: 15.500px; line-height: 24px; font-weight: 600; margin-top: 16px; letter-spacing: -0.3px; }
.g3 { display: grid; grid-template-columns: repeat(3, 205px); grid-auto-rows: 20px; row-gap: 16px; margin-top: 12px; letter-spacing: -0.35px; }
.g3 span { display: flex; align-items: center; gap: 8px; }
.cb { width: 16px; height: 16px; border: 1px solid #0080ff; border-radius: 4px; }
.cb.on { background: #0080ff; color: #fff; }
.cb .i { display: block; width: 14px; height: 14px; }
.last { margin-top: 19px; }
.bar { background: #fcfcfc; display: flex; flex-direction: column; align-items: center; padding: 8px 0 7px; }
.bar .up, .bar .down { border-bottom-color: #8b8b8b; border-top-color: #8b8b8b; }
.bar .thumb { width: 13px; height: 405px; margin: 10px 0 340px; border-radius: 7px; background: #8b8b8b; flex: none; }

/* taskbar */
.taskbar { border-top: 2px solid #4d4244; background: linear-gradient(90deg, #26212a 0, #271f24 190px, #48171a 390px, #4a1514 530px, #431523 620px, #271f27 720px, #262128 1000px, #2b1f2a 1380px, #46142c 1560px, #3a1735 1680px, #40141b 1800px, #3b1520 1920px); display: flex; color: #fff; }
.weather { width: 245px; padding: 12px 0 0 29px; position: relative; }
.weather svg { width: 38px; height: 40px; }
.weather b, .n31, .mm { position: absolute; border-radius: 50%; font-weight: 400; text-align: center; letter-spacing: -.5px; }
.weather b { left: 46px; top: 8px; width: 24px; height: 24px; background: #ff8d9b; color: #222; line-height: 24px; font-size: 15px; }
.apps { display: grid; grid-template-columns: repeat(17, 66.060px); }
.apps span { position: relative; display: flex; flex-direction: column; align-items: center; padding-top: 16px; }
.apps svg { width: 36px; height: 36px; }
.apps .run::after { content: ""; width: 9px; height: 5px; border-radius: 3px; background: #9c9497; margin-top: 6px; }
.n31 { left: 32px; top: 7px; width: 28px; height: 28px; background: #f37b68; color: #1e1e1e; line-height: 28px; font-size: 16px; }
.ai { width: 33px; height: 32px; border-radius: 6px; background: #330000; color: #ff9a00; font-weight: 700; font-size: 18px; line-height: 31px; text-align: center; }
.apps .cur::before { content: ""; position: absolute; left: 3px; top: 4px; width: 58px; height: 60px; border-radius: 6px; border: 1px solid #54484e; background: #3f343b; }
.cur svg { position: relative; }
.cur::after { content: ""; width: 24px; height: 5px; border-radius: 3px; background: #f58a72; margin-top: 6px; z-index: 1; }
.mm { right: 7px; top: 9px; width: 23px; height: 23px; background: #7e57c2; line-height: 23px; font-size: 13px; z-index: 2; }
.tray { flex: 1; display: flex; align-items: center; padding-bottom: 2px; }
.tray svg { flex: none; fill: none; stroke: #fff; stroke-width: 1.800; overflow: visible; }
.t-chev { width: 16px; height: 10px; margin-left: 103px; }
.tray .t-cloud { width: 26px; height: 24px; margin: 4px 0 0 27px; stroke: none; }
.t-pad { width: 24px; height: 20px; margin-left: 23px; }
.lang { width: 40px; margin-left: 25px; text-align: center; font-size: 17px; line-height: 23px; letter-spacing: 0; }
.t-wifi { width: 24px; height: 18px; margin-left: 25px; }
.t-vol { width: 24px; height: 20px; margin-left: 12px; }
.t-bat { width: 25px; height: 20px; margin-left: 11px; }
.clock { margin-left: auto; margin-right: 28px; text-align: right; font-size: 17px; line-height: 24px; letter-spacing: 0.5px; white-space: nowrap; }
```
